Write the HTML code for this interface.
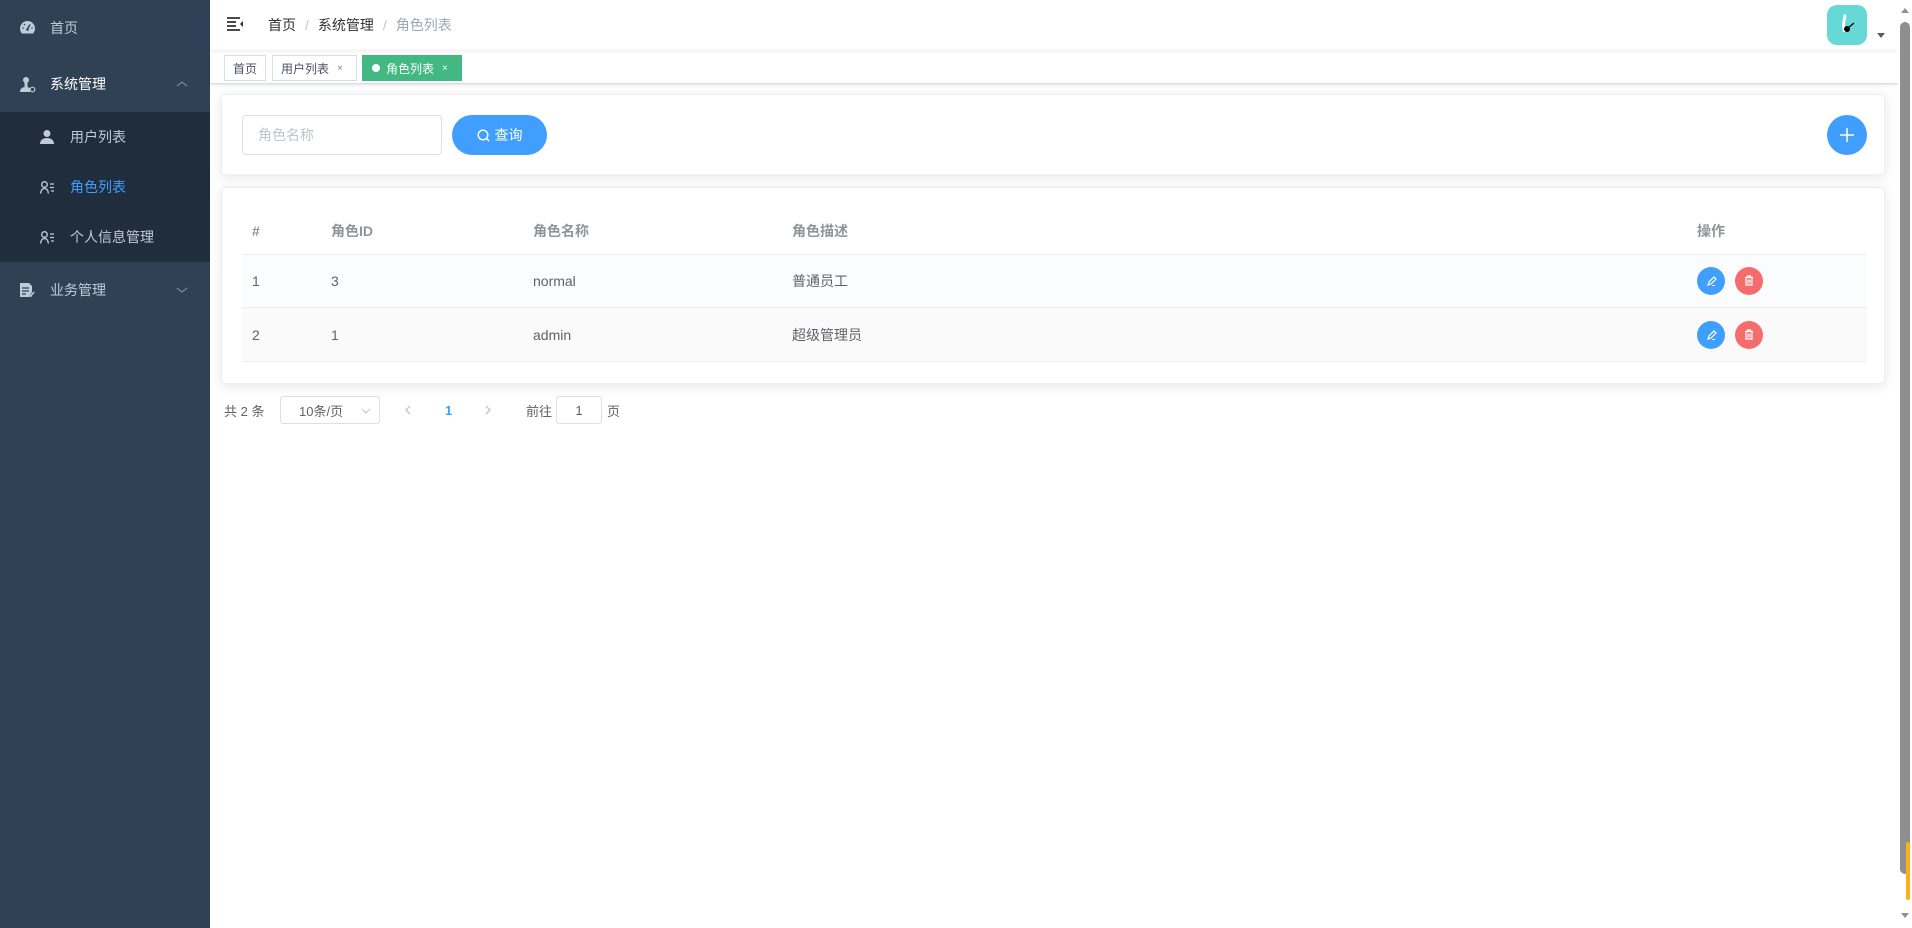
<!DOCTYPE html>
<html><head><meta charset="utf-8">
<style>
*{box-sizing:border-box;margin:0;padding:0}
html,body{width:1912px;height:928px;overflow:hidden;background:#fff;font-family:"Liberation Sans","Noto Sans CJK SC",sans-serif;font-size:14px;color:#606266}
.side{position:absolute;left:0;top:0;width:210px;height:928px;background:#304156}
.mi{position:absolute;left:0;width:210px;height:56px;line-height:56px;color:#bfcbd9;font-size:14px}
.mi .t{position:absolute;left:50px}
.sub{position:absolute;left:0;top:112px;width:210px;height:150px;background:#1f2d3d}
.si{position:absolute;left:0;width:210px;height:50px;line-height:50px;color:#bfcbd9}
.si .t{position:absolute;left:70px}
.arrow{position:absolute;right:22px;top:24px}
.main{position:absolute;left:210px;top:0;width:1688px;height:928px;background:#fff}
.hdr{position:absolute;left:0;top:0;width:1688px;height:50px;box-shadow:0 1px 4px rgba(0,21,41,.08)}
.bc{position:absolute;left:58px;top:0;height:50px;display:flex;align-items:center;font-size:14px;color:#303133}
.bc .s{color:#c0c4cc;margin:0 9px}
.bc .l{color:#97a8be}
.tags{position:absolute;left:0;top:50px;width:1688px;height:34px;border-bottom:1px solid #d8dce5;box-shadow:0 1px 3px 0 rgba(0,0,0,.12)}
.tag{position:absolute;top:5px;height:26px;border:1px solid #d8dce5;font-size:12px;color:#495060;padding:0 8px;background:#fff;display:flex;align-items:center}
.tag .x{font-size:10px;color:#888;margin-left:8px}
.card{position:absolute;left:11px;width:1664px;background:#fff;border:1px solid #ebeef5;border-radius:4px;box-shadow:0 2px 12px 0 rgba(0,0,0,.1)}
.c{position:absolute;display:flex;align-items:center;font-size:14px;height:54px}
.th{color:#909399;font-weight:bold;height:46px;top:20px}
.btn{position:absolute;width:28px;height:28px;border-radius:50%}
.pg{position:absolute;top:396px;height:28px;display:flex;align-items:center;font-size:13px}
</style></head><body>
<div class="side">
  <div class="mi" style="top:0"><svg style="position:absolute;left:20px;top:21px" width="15" height="13" viewBox="0 0 15 13"><path d="M7.5 0A7.5 7.5 0 0 0 0 7.5c0 2 .8 3.8 2 5h11c1.2-1.2 2-3 2-5A7.5 7.5 0 0 0 7.5 0z" fill="#bfcbd9"/><path d="M7.5 8L10 3.5" stroke="#304156" stroke-width="1.5"/><circle cx="7.5" cy="8.5" r="1.3" fill="#304156"/><circle cx="3" cy="7" r=".8" fill="#304156"/><circle cx="12" cy="7" r=".8" fill="#304156"/><circle cx="4.5" cy="3.5" r=".8" fill="#304156"/></svg><span class="t">首页</span></div>
  <div class="mi" style="top:56px;color:#fff"><svg style="position:absolute;left:20px;top:20px" width="16" height="17" viewBox="0 0 16 17"><circle cx="6" cy="4" r="3" fill="#bfcbd9"/><rect x="4.5" y="6" width="3" height="5" fill="#bfcbd9"/><path d="M0 16c0-4 3-5 6-5s4 1 4 2v3z" fill="#bfcbd9"/><circle cx="12.5" cy="13.5" r="2.3" fill="none" stroke="#bfcbd9" stroke-width="1.2"/></svg><span class="t">系统管理</span><svg class="arrow" width="12" height="8" viewBox="0 0 12 8"><path d="M1 6l5-4 5 4" fill="none" stroke="#909399" stroke-width="1"/></svg></div>
  <div class="sub">
    <div class="si" style="top:0"><svg style="position:absolute;left:40px;top:18px" width="14" height="14" viewBox="0 0 14 14"><circle cx="7" cy="3.5" r="3.5" fill="#bfcbd9"/><path d="M0 14c0-4 3-6 7-6s7 2 7 6z" fill="#bfcbd9"/></svg><span class="t">用户列表</span></div>
    <div class="si" style="top:50px;color:#409eff"><svg style="position:absolute;left:40px;top:19px" width="15" height="13" viewBox="0 0 15 13"><circle cx="4.5" cy="3.5" r="2.8" fill="none" stroke="#bfcbd9" stroke-width="1.3"/><path d="M.7 12.5c0-3 1.6-5 3.8-5s3.8 2 3.8 5" fill="none" stroke="#bfcbd9" stroke-width="1.3"/><path d="M10 3h4M10 6.5h4M11 10h3" stroke="#bfcbd9" stroke-width="1.2"/></svg><span class="t">角色列表</span></div>
    <div class="si" style="top:100px"><svg style="position:absolute;left:40px;top:19px" width="15" height="13" viewBox="0 0 15 13"><circle cx="4.5" cy="3.5" r="2.8" fill="none" stroke="#bfcbd9" stroke-width="1.3"/><path d="M.7 12.5c0-3 1.6-5 3.8-5s3.8 2 3.8 5" fill="none" stroke="#bfcbd9" stroke-width="1.3"/><path d="M10 3h4M10 6.5h4M11 10h3" stroke="#bfcbd9" stroke-width="1.2"/></svg><span class="t">个人信息管理</span></div>
  </div>
  <div class="mi" style="top:262px"><svg style="position:absolute;left:20px;top:21px" width="15" height="15" viewBox="0 0 15 15"><path d="M0 0h9l3 3v6l-3 5H0z" fill="#bfcbd9"/><path d="M2 5h7M2 8h7M2 11h4" stroke="#304156" stroke-width="1.2"/><path d="M10 14l4-5" stroke="#bfcbd9" stroke-width="1.5"/></svg><span class="t">业务管理</span><svg class="arrow" width="12" height="8" viewBox="0 0 12 8"><path d="M1 2l5 4 5-4" fill="none" stroke="#909399" stroke-width="1"/></svg></div>
</div>
<div class="main">
  <div class="hdr">
    <svg style="position:absolute;left:17px;top:17px" width="16" height="14" viewBox="0 0 16 14"><path d="M0 1h13M0 5h9M0 9h9M0 13h13" stroke="#303133" stroke-width="1.8"/><path d="M16 4v6l-3-3z" fill="#303133"/></svg>
    <div class="bc">首页<span class="s">/</span>系统管理<span class="s">/</span><span class="l">角色列表</span></div>
    <div style="position:absolute;left:1617px;top:5px;width:40px;height:40px;border-radius:10px;background:#66d9d6"><svg width="40" height="40" viewBox="0 0 40 40"><path d="M17 9c2 0 3 2 2 4l-1 6 1 8h-3l-1-7 1-7z" fill="#fff"/><circle cx="20" cy="24" r="3" fill="#000"/><path d="M21 23l6-5" stroke="#000" stroke-width="1.2"/></svg></div>
    <div style="position:absolute;left:1667px;top:33px;border-left:4px solid transparent;border-right:4px solid transparent;border-top:5px solid #5a5e66"></div>
  </div>
  <div class="tags">
    <div class="tag" style="left:14px;width:42px">首页</div>
    <div class="tag" style="left:62px;width:85px">用户列表<span class="x">×</span></div>
    <div class="tag" style="left:152px;width:100px;background:#42b983;border-color:#42b983;color:#fff;padding-left:9px"><span style="display:inline-block;width:8px;height:8px;border-radius:50%;background:#fff;margin-right:6px"></span>角色列表<span class="x" style="color:#fff">×</span></div>
  </div>
  <div class="card" style="top:94px;height:81px">
    <div style="position:absolute;left:20px;top:20px;width:200px;height:40px;border:1px solid #dcdfe6;border-radius:4px;display:flex;align-items:center;padding-left:15px;color:#c0c4cc">角色名称</div>
    <div style="position:absolute;left:230px;top:20px;width:95px;height:40px;border-radius:20px;background:#409eff;color:#fff;display:flex;align-items:center;justify-content:center"><svg width="13" height="13" viewBox="0 0 13 13" style="margin-right:5px"><circle cx="6" cy="6" r="4.8" fill="none" stroke="#fff" stroke-width="1.4"/><path d="M9.5 9.5l2.5 2.5" stroke="#fff" stroke-width="1.4"/></svg>查询</div>
    <div style="position:absolute;left:1605px;top:20px;width:40px;height:40px;border-radius:50%;background:#409eff"><svg width="40" height="40"><path d="M20 13v14M13 20h14" stroke="#fff" stroke-width="1.5"/></svg></div>
  </div>
  <div class="card" style="top:187px;height:197px">
    <div style="position:absolute;left:20px;top:66px;width:1625px;height:54px;background:#fafcfe;border-top:1px solid #ebeef5;border-bottom:1px solid #ebeef5"></div>
    <div style="position:absolute;left:20px;top:120px;width:1625px;height:54px;background:#fafafa;border-bottom:1px solid #ebeef5"></div>
    <div class="c th" style="left:30px">#</div>
    <div class="c th" style="left:109px">角色ID</div>
    <div class="c th" style="left:311px">角色名称</div>
    <div class="c th" style="left:570px">角色描述</div>
    <div class="c th" style="left:1475px">操作</div>
    <div class="c" style="left:30px;top:66px">1</div><div class="c" style="left:109px;top:66px">3</div><div class="c" style="left:311px;top:66px">normal</div><div class="c" style="left:570px;top:66px">普通员工</div>
    <div class="c" style="left:30px;top:120px">2</div><div class="c" style="left:109px;top:120px">1</div><div class="c" style="left:311px;top:120px">admin</div><div class="c" style="left:570px;top:120px">超级管理员</div>
    <div class="btn" style="left:1475px;top:79px;background:#409eff"><svg width="28" height="28"><path d="M11 18l1-3 5-5 2 2-5 5z" fill="none" stroke="#fff" stroke-width="1.2"/><path d="M15 18.5h3" stroke="#fff"/></svg></div>
    <div class="btn" style="left:1513px;top:79px;background:#f56c6c"><svg width="28" height="28"><path d="M10 10.5h8M12.5 10.5v-1.5h3v1.5M11 11v7h6v-7M13 12.5v4M15 12.5v4" fill="none" stroke="#fff" stroke-width="1.2"/></svg></div>
    <div class="btn" style="left:1475px;top:133px;background:#409eff"><svg width="28" height="28"><path d="M11 18l1-3 5-5 2 2-5 5z" fill="none" stroke="#fff" stroke-width="1.2"/><path d="M15 18.5h3" stroke="#fff"/></svg></div>
    <div class="btn" style="left:1513px;top:133px;background:#f56c6c"><svg width="28" height="28"><path d="M10 10.5h8M12.5 10.5v-1.5h3v1.5M11 11v7h6v-7M13 12.5v4M15 12.5v4" fill="none" stroke="#fff" stroke-width="1.2"/></svg></div>
  </div>
  <div class="pg" style="left:14px">共 2 条</div>
  <div class="pg" style="left:70px;width:100px;border:1px solid #dcdfe6;border-radius:3px;padding-left:18px">10条/页<svg style="position:absolute;right:8px;top:11px" width="10" height="6" viewBox="0 0 10 6"><path d="M1 1l4 4 4-4" fill="none" stroke="#c0c4cc"/></svg></div>
  <div class="pg" style="left:194px"><svg width="8" height="10" viewBox="0 0 8 10"><path d="M6 1L2 5l4 4" fill="none" stroke="#c0c4cc" stroke-width="1.3"/></svg></div>
  <div class="pg" style="left:235px;color:#409eff;font-weight:bold">1</div>
  <div class="pg" style="left:274px"><svg width="8" height="10" viewBox="0 0 8 10"><path d="M2 1l4 4-4 4" fill="none" stroke="#c0c4cc" stroke-width="1.3"/></svg></div>
  <div class="pg" style="left:316px">前往</div>
  <div class="pg" style="left:346px;width:46px;border:1px solid #dcdfe6;border-radius:3px;justify-content:center">1</div>
  <div class="pg" style="left:397px">页</div>
</div>
<div style="position:absolute;left:1898px;top:0;width:14px;height:928px;background:#fff">
  <div style="position:absolute;left:3px;top:8px;border-left:4px solid transparent;border-right:4px solid transparent;border-bottom:5px solid #8f8f8f"></div>
  <div style="position:absolute;left:2px;top:22px;width:10px;height:852px;border-radius:5px;background:#8f8f8f"></div>
  <div style="position:absolute;left:8px;top:842px;width:4px;height:58px;background:#fbb01a;border-radius:2px"></div>
  <div style="position:absolute;left:3px;top:913px;border-left:4px solid transparent;border-right:4px solid transparent;border-top:5px solid #8f8f8f"></div>
</div>
</body></html>
